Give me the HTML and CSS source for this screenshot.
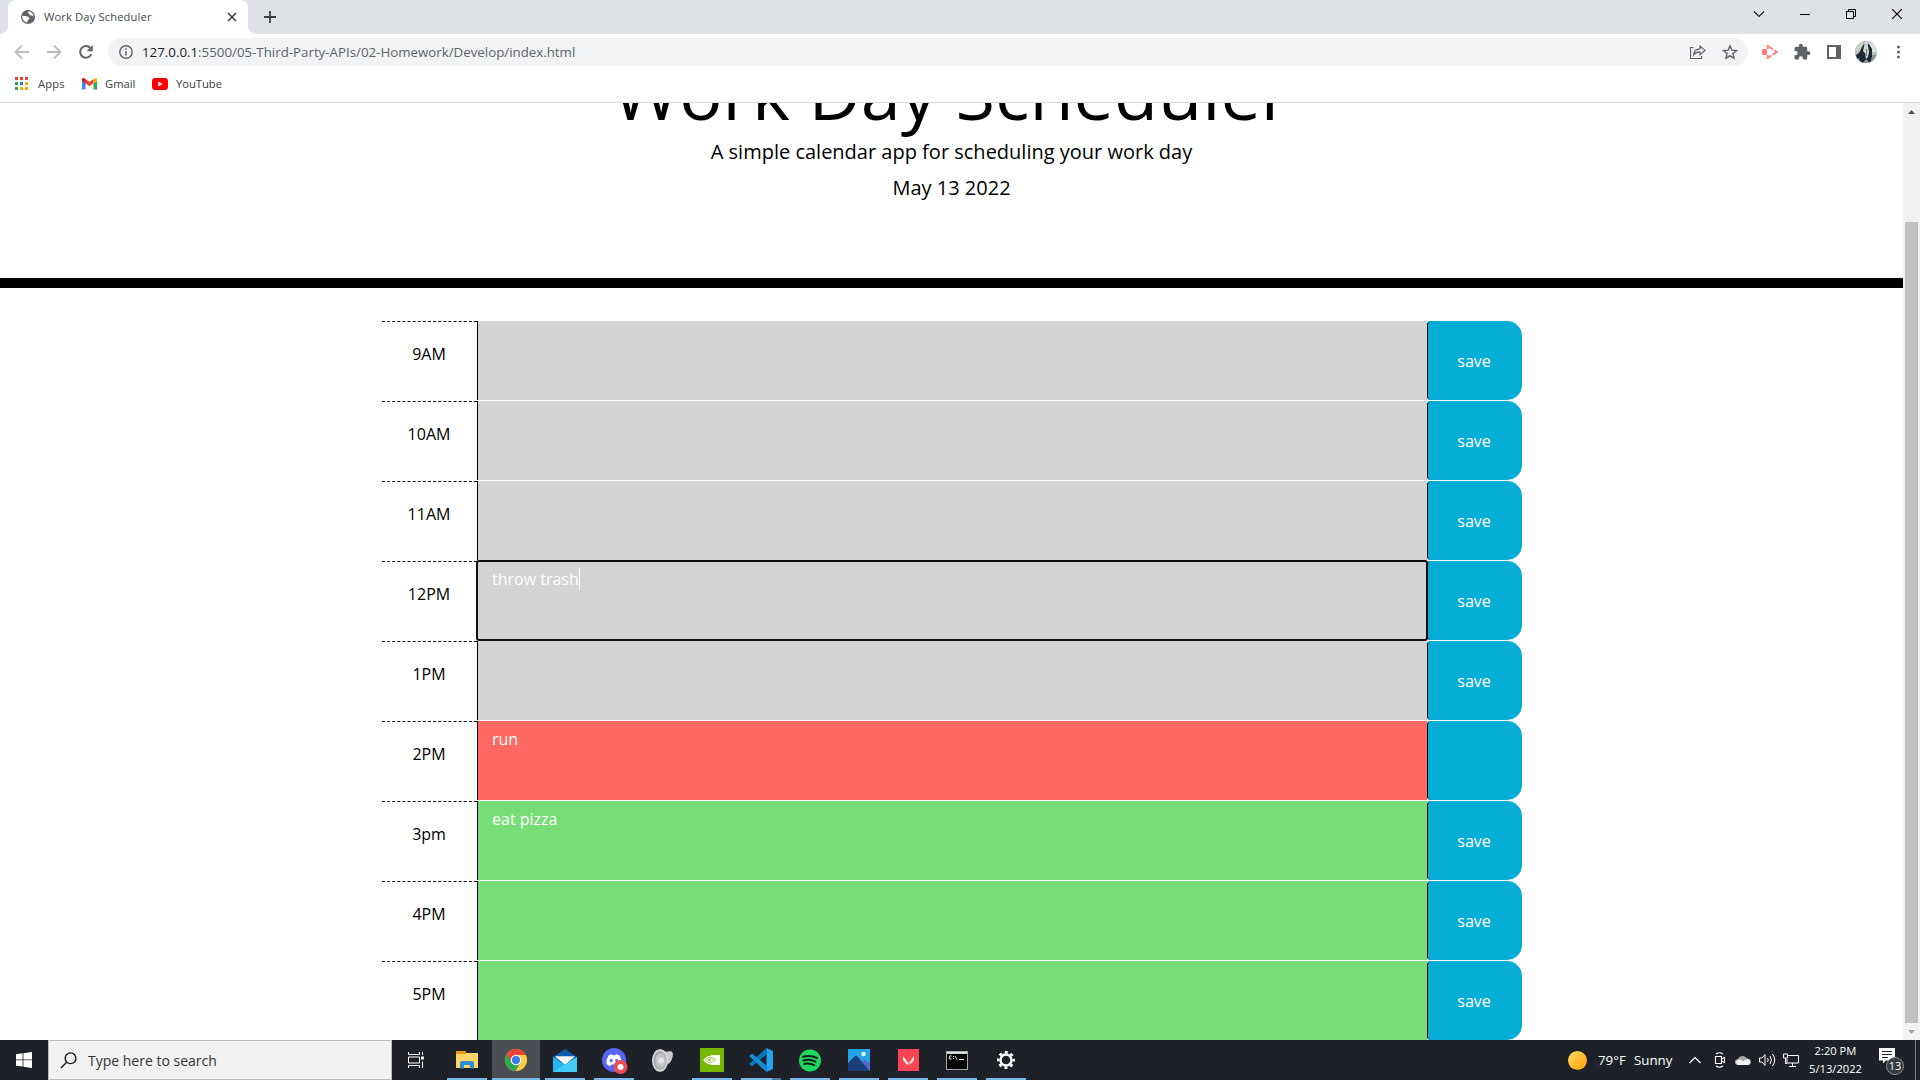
FILE: index.html
```html
<!DOCTYPE html>
<html lang="en">
<head>
<meta charset="utf-8">
<title>Work Day Scheduler</title>
<link rel="stylesheet" href="styles.css">
</head>
<body>
<div class="tabstrip">
  <div class="tab">
    <svg class="globe" width="16" height="16" viewBox="0 0 16 16"><circle cx="8" cy="8" r="7" fill="#5f6368"/><path d="M2.400 6.800L7 7.200c1 .3 1 1.300 2.300 1.300.8 2-2 2-2.100 4.900C4.500 13.300 2.300 10.500 2.300 8zM9 2.300c-1.500 1-2 2.300.2 2.400.4 1.500 1.600 2 3.300 1.800l1 1.500c.2-3-1.800-5.300-4.500-5.700z" fill="#fff"/></svg>
    <span class="tab-title">Work Day Scheduler</span>
    <svg class="tab-close" width="10" height="10" viewBox="0 0 10 10"><path d="M1 1l8 8M9 1l-8 8" stroke="#3c4043" stroke-width="1.600"/></svg>
  </div>
  <svg class="newtab" width="12" height="12" viewBox="0 0 12 12"><path d="M6 0v12M0 6h12" stroke="#3c4043" stroke-width="1.800"/></svg>
  <div class="winctl">
    <span><svg width="12" height="8" viewBox="0 0 12 8"><path d="M1 1.500l5 5 5-5" fill="none" stroke="#222" stroke-width="1.200"/></svg></span>
    <span><svg width="10" height="2" viewBox="0 0 10 2"><path d="M0 1.500h10" stroke="#000"/></svg></span>
    <span><svg width="10" height="10" viewBox="0 0 10 10"><path d="M.5 2.500h7v7h-7zM2.500 2.500v-2h7v7h-2" fill="none" stroke="#000"/></svg></span>
    <span><svg width="10" height="10" viewBox="0 0 10 10"><path d="M0 0l10 10M10 0L0 10" stroke="#000" stroke-width="1.100"/></svg></span>
  </div>
</div>
<div class="toolbar">
  <span class="slot"><svg width="16" height="16" viewBox="0 0 16 16"><path d="M15 8H2.500M8 1.500L1.500 8 8 14.500" fill="none" stroke="#babcbe" stroke-width="1.800"/></svg></span>
  <span class="slot"><svg width="16" height="16" viewBox="0 0 16 16"><path d="M1 8h12.500M8 1.500L14.500 8 8 14.500" fill="none" stroke="#babcbe" stroke-width="1.800"/></svg></span>
  <span class="slot"><svg width="16" height="16" viewBox="0 0 16 16"><path d="M13.300 10.200A5.800 5.800 0 1 1 12.300 4" fill="none" stroke="#5f6368" stroke-width="2"/><path d="M14.800 1v6.200H8.600z" fill="#5f6368"/></svg></span>
  <div class="omnibox">
    <svg width="14" height="14" viewBox="0 0 14 14"><circle cx="7" cy="7" r="6.200" fill="none" stroke="#5f6368" stroke-width="1.400"/><path d="M7 6v4.500M7 3.300v1.500" stroke="#5f6368" stroke-width="1.500"/></svg>
    <span class="url"><b>127.0.0.1</b>:5500/05-Third-Party-APIs/02-Homework/Develop/index.html</span>
    <span class="slot"><svg width="16" height="16" viewBox="0 0 16 16"><path d="M3.500 3.500h-3v11h11V12" fill="none" stroke="#5f6368" stroke-width="1.200"/><path d="M3.600 10.800C4 7 6 5 10 4.900V2l5 4.400-5 4.300V7.900c-3 0-4.900.8-6.400 2.900z" fill="none" stroke="#5f6368" stroke-width="1.200"/></svg></span>
    <span class="slot"><svg width="16" height="16" viewBox="0 0 16 16"><path d="M8 1.800l1.800 4.300 4.700.4-3.600 3.100 1.100 4.600L8 11.800l-4 2.400 1.100-4.600L1.500 6.500l4.700-.4z" fill="none" stroke="#5f6368" stroke-width="1.400"/></svg></span>
  </div>
  <span class="slot"><svg width="16" height="14" viewBox="0 0 16 14"><rect x="0" y="4" width="5" height="6" rx="1" fill="#ff7c7c"/><path d="M5.800 4V1L15 7l-9.200 6v-3" fill="none" stroke="#ff7c7c" stroke-width="1.800" stroke-dasharray="9 1.500"/></svg></span>
  <span class="slot"><svg width="18" height="18" viewBox="0 0 24 24"><path d="M20.500 11H19V7a2 2 0 0 0-2-2h-4V3.500a2.500 2.500 0 0 0-5 0V5H4a2 2 0 0 0-2 2v3.800h1.500a2.700 2.700 0 0 1 0 5.400H2V20a2 2 0 0 0 2 2h3.800v-1.500a2.700 2.700 0 0 1 5.400 0V22H17a2 2 0 0 0 2-2v-4h1.500a2.500 2.500 0 0 0 0-5z" fill="#5f6368"/></svg></span>
  <span class="slot"><svg width="14" height="14" viewBox="0 0 14 14"><path d="M0 0h14v14H0zM2 2v10h7V2z" fill="#5f6368" fill-rule="evenodd"/></svg></span>
  <span class="slot"><svg width="22" height="22" viewBox="0 0 22 22"><defs><clipPath id="av"><circle cx="11" cy="11" r="11"/></clipPath></defs><g clip-path="url(#av)"><path d="M0 0h22v22H0z" fill="#b4c2bd"/><path d="M0 0h8v10H0z" fill="#c9d2c6"/><path d="M14 2h8v9h-8z" fill="#d8e2df"/><path d="M0 14h22v8H0z" fill="#8494a3"/><path d="M7 6l2-3 2 1 3-1 3 5 0 8-2 6-4-4-3 4-3-1-1-4-2 1-1-4 3-2z" fill="#1e2a33"/><path d="M10 1l2-1 1 5 1 6-1 5-2 2-1-6-2-2z" fill="#d5d7d2"/><path d="M11 8l1 0v7h-1z" fill="#707b80"/></g></svg></span>
  <span class="slot"><svg width="4" height="14" viewBox="0 0 4 14"><g fill="#5f6368"><circle cx="2.500" cy="2" r="1.500"/><circle cx="2.500" cy="7" r="1.500"/><circle cx="2.500" cy="12" r="1.500"/></g></svg></span>
</div>
<div class="bookmarks">
  <svg width="13" height="13" viewBox="0 0 13 13"><path d="M0 0h3v3H0zM5 0h3v3H5zM10 0h3v3h-3z" fill="#ea4335"/><path d="M0 5h3v3H0zM0 10h3v3H0z" fill="#34a853"/><path d="M5 5h3v3H5z" fill="#1a73e8"/><path d="M10 5h3v3h-3zM5 10h3v3H5zM10 10h3v3h-3z" fill="#f9ab00"/></svg>
  <span class="bm apps">Apps</span>
  <svg width="15" height="12" viewBox="0 0 15 12"><path d="M0 2v9.500h3.500V5z" fill="#4285f4"/><path d="M15 2v9.500h-3.500V5z" fill="#34a853"/><path d="M0 2.500V1.500C0 0 2 0 3 .8L7.500 4 12 .8l-.5 4.500-4 3-4-3z" fill="#ea4335"/><path d="M11.500 1.200C13 0 15 0 15 1.700v1.100l-3.500 2.600z" fill="#fbbc04"/><path d="M0 1.700v1.100l3.500 2.600V1.200C2 0 0 0 0 1.700z" fill="#c5221f"/></svg>
  <span class="bm gmail">Gmail</span>
  <svg width="16" height="12" viewBox="0 0 16 12"><rect width="16" height="12" rx="3" fill="#f00"/><path d="M6.300 3.500v5L10.500 6z" fill="#fff"/></svg>
  <span class="bm youtube">YouTube</span>
</div>

<div class="viewport">
  <div class="page">
    <header class="jumbotron">
      <h1>Work Day Scheduler</h1>
      <p class="lead">A simple calendar app for scheduling your work day</p>
      <p class="lead date">May 13 2022</p>
    </header>
    <main class="container">
      <div class="row"><div class="hour">9AM</div><div class="description past"></div><div class="save">save</div></div>
      <div class="row"><div class="hour">10AM</div><div class="description past"></div><div class="save">save</div></div>
      <div class="row"><div class="hour">11AM</div><div class="description past"></div><div class="save">save</div></div>
      <div class="row"><div class="hour">12PM</div><div class="description past focused">throw trash<i class="caret"></i></div><div class="save">save</div></div>
      <div class="row"><div class="hour">1PM</div><div class="description past"></div><div class="save">save</div></div>
      <div class="row"><div class="hour">2PM</div><div class="description present">run</div><div class="save"></div></div>
      <div class="row"><div class="hour">3pm</div><div class="description future">eat pizza</div><div class="save">save</div></div>
      <div class="row"><div class="hour">4PM</div><div class="description future"></div><div class="save">save</div></div>
      <div class="row"><div class="hour">5PM</div><div class="description future"></div><div class="save">save</div></div>
    </main>
  </div>
  <div class="scrollbar">
    <svg width="7" height="4" viewBox="0 0 7 4"><path d="M0 4L3.500 0 7 4z" fill="#505050"/></svg>
    <div class="thumb"></div>
    <svg width="7" height="4" viewBox="0 0 7 4"><path d="M0 0l3.500 4L7 0z" fill="#a3a3a3"/></svg>
  </div>
</div>

<div class="taskbar">
  <div class="start"><svg width="16" height="16" viewBox="0 0 16 16"><path d="M0 2.200L6.600 1.300v6.200H0zM7.400 1.200L16 0v7.500H7.400zM0 8.300h6.600v6.300L0 13.700zM7.400 8.300H16V16l-8.600-1.200z" fill="#fff"/></svg></div>
  <div class="search">
    <svg width="17" height="17" viewBox="0 0 17 17"><circle cx="10.500" cy="6.300" r="5.400" fill="none" stroke="#111" stroke-width="1.300"/><path d="M6.700 10.200L.8 16" stroke="#111" stroke-width="1.300"/></svg>
    <span class="search-text">Type here to search</span>
  </div>
  <div class="taskview"><svg width="17" height="16" viewBox="0 0 17 16"><path d="M.5 0v2.500h11V0M.5 16v-2.500h11V16M.5 5h11v6H.5zM14.500 0v3M14.500 9.500V16" fill="none" stroke="#fff"/><path d="M13 4.500h3v3h-3z" fill="#fff"/></svg></div>
  <div class="apps-list">
    <div class="app open"><svg width="22" height="18" viewBox="0 0 22 18"><path d="M0 0h9l1.500 2H22v15H0z" fill="#ffd567"/><path d="M0 0h9l1.500 2L9 3H0z" fill="#e19b12"/><path d="M4 17.500V12q0-2 2-2h10q2 0 2 2v5.500h-4V14H8v3.500z" fill="#2f8ed8"/></svg></div>
    <div class="app open active"><svg width="22" height="22" viewBox="0 0 22 22"><circle cx="11" cy="11" r="11" fill="#ffcd41"/><path d="M1.500 5.500a11 11 0 0 0 9 16.500l5-8.500-4.500-2.500z" fill="#2da94f"/><path d="M11 6h9.800A11 11 0 0 0 1.500 5.500L6.500 13z" fill="#ea4335"/><circle cx="11" cy="11" r="5.300" fill="#fff"/><circle cx="11" cy="11" r="4.200" fill="#3b7ded"/></svg></div>
    <div class="app open"><svg width="24" height="23" viewBox="0 0 24 23"><path d="M0 8L12 0l12 8v3H0z" fill="#0b5db0"/><path d="M2 7.500h20L12 16z" fill="#f5f5f5"/><path d="M0 8l12 7.500L24 8v15H0z" fill="#24b5f0"/><path d="M0 23l24-15v15z" fill="#45cdf7"/><path d="M3 7.500h18L12 14.500z" fill="#f5f5f5"/></svg></div>
    <div class="app open"><svg class="discord" width="26" height="26" viewBox="0 0 26 26"><circle cx="12" cy="12" r="12" fill="#5865f2"/><path d="M6.500 7.500Q9 6 10 6.300l.5 1h3l.5-1q1 0 3.500 1.200 2.500 4 2 8.500-2 1.800-4 2l-1-1.600h-5L8.500 18q-2-.2-4-2-.5-4.500 2-8.500z" fill="#fff"/><ellipse cx="9.300" cy="12.500" rx="1.500" ry="1.700" fill="#5865f2"/><ellipse cx="14.700" cy="12.500" rx="1.500" ry="1.700" fill="#5865f2"/><circle cx="18.500" cy="19" r="7" fill="#ed4b55"/><circle cx="18.500" cy="19" r="3" fill="#fff"/></svg></div>
    <div class="app"><svg width="22" height="23" viewBox="0 0 22 23"><path d="M8 0l6 2.500 5-.5q2.500 1 2 5-1 5-4 8l-3 .5-5 6.500z" fill="#8f9294"/><path d="M14 3l5-.5q2 1 1.500 4.500-1 5-3.500 7h-3z" fill="#c9cbcc"/><ellipse cx="8" cy="11.500" rx="8" ry="11.300" fill="#dadcdd"/><ellipse cx="8" cy="11.500" rx="6.500" ry="9.500" fill="#a5a8aa"/><ellipse cx="8.500" cy="11.500" rx="5" ry="7.500" fill="#c2c5c6"/><circle cx="9" cy="11.500" r="3" fill="#e4e5e6"/></svg></div>
    <div class="app open"><svg width="24" height="24" viewBox="0 0 24 24"><path d="M0 0h24v24H0z" fill="#76b900"/><path d="M11 7h9v10h-9z" fill="#fff"/><path d="M4 12Q10.500 4.500 17 12 10.500 19.500 4 12z" fill="#76b900" stroke="#fff" stroke-width="1.200"/><path d="M6.800 12q3.700-4 7.400 0-3.700 4-7.400 0z" fill="none" stroke="#fff" stroke-width="1.200"/><circle cx="11" cy="12" r="1" fill="#fff"/></svg></div>
    <div class="app open grouped"><svg width="24" height="24" viewBox="0 0 24 24"><path d="M17.500 0L24 3v18l-6.500 3z" fill="#24a4ef"/><path d="M17.500 0v6.500L3 18.500l-3-2.500z" fill="#0875b8"/><path d="M0 8l3-2.500 14.500 12V24z" fill="#128bd4"/></svg></div>
    <div class="app open"><svg width="22" height="23" viewBox="0 0 22 22"><circle cx="11" cy="11" r="11" fill="#1ed760"/><path d="M4 7.300q7.500-2 14 1.200M4.500 11q6.500-1.700 12 1.200M5.200 14.500q5.500-1.300 10 1.200" fill="none" stroke="#17201b" stroke-width="2" stroke-linecap="round"/></svg></div>
    <div class="app open"><svg width="22" height="22" viewBox="0 0 22 22"><path d="M0 0h22v22H0z" fill="#25a3ea"/><path d="M0 14l7-7q1-1 2 0l13 15H0z" fill="#1b3f78"/><path d="M14 13l2-2q1-1 2 0l4 4v7z" fill="#5468c4"/><circle cx="15.500" cy="5" r="2.200" fill="#e8f7ff"/></svg></div>
    <div class="app open"><svg width="21" height="22" viewBox="0 0 21 22"><path d="M0 0h21v22H0z" fill="#fd4556"/><path d="M5 7l6.500 8.500H8.700L5 11zM16 7v4l-2.700 3.500h-2.500z" fill="#f3ece3"/></svg></div>
    <div class="app open"><svg width="22" height="19" viewBox="0 0 22 19"><path d="M0 0h22v19H0z" fill="#a5a8aa"/><path d="M1 3h20v15H1z" fill="#050505"/><path d="M1 1h20v1.500H1z" fill="#e9e9e9"/><path d="M5.500 5h-2v3h2M7.500 5v1M7.500 7v1M9 5l2 3.500M13 8.500h5" fill="none" stroke="#ddd"/></svg></div>
    <div class="app open"><svg width="18" height="18" viewBox="0 0 18 18"><circle cx="9" cy="9" r="5.500" fill="none" stroke="#fff" stroke-width="2.400"/><circle cx="9" cy="9" r="7.700" fill="none" stroke="#fff" stroke-width="2.500" stroke-dasharray="3 3.047" stroke-dashoffset="1.500"/></svg></div>
  </div>
  <div class="tray">
    <i class="sun"></i>
    <span class="weather"><span class="temp">79°F</span><span class="sunny">Sunny</span></span>
    <svg class="t-up" width="12" height="8" viewBox="0 0 12 8"><path d="M.5 7L6 1.500 11.500 7" fill="none" stroke="#fff" stroke-width="1.200"/></svg>
    <svg class="t-cam" width="12" height="16" viewBox="0 0 12 16"><path d="M1.500 4.500h6v7h-6zM7.500 7l3-1.500v5l-3-1.500M2 2q3.500-2.500 7 0M2 14q3.500 2.500 7 0" fill="none" stroke="#fff" stroke-width="1.100"/></svg>
    <svg class="t-cloud" width="16" height="10" viewBox="0 0 16 10"><path d="M3 10a3 3 0 0 1 0-6 5 5 0 0 1 9-.5 3.300 3.300 0 0 1 1 6.500z" fill="#a7a7a7"/><path d="M3 10a3 3 0 0 1-.5-5q3-1.500 5.500 1.200l4-2.200a3 3 0 0 1 1 6z" fill="#f4f4f4"/></svg>
    <svg class="t-vol" width="17" height="14" viewBox="0 0 17 14"><path d="M.5 5H3l3-3.500v11L3 9H.5zM8.500 5q1.500 2 0 4M11 3q3 4 0 8M13.500 1q4.500 6 0 12" fill="none" stroke="#fff"/></svg>
    <svg class="t-net" width="16" height="14" viewBox="0 0 16 14"><path d="M5 2.500h10.500v7.500H4V6M.5 1h4v4h-4zM2.500 5v5.500H4M9.500 10v3M6 13.500h7" fill="none" stroke="#fff"/></svg>
    <div class="clock"><span class="time">2:20 PM</span><span class="day">5/13/2022</span></div>
    <div class="notif">
      <svg width="16" height="16" viewBox="0 0 16 16"><path d="M0 0h16v12.500H7l-3 3v-3H0z" fill="#fff"/><path d="M3 3.500h10M3 6.500h10M3 9.500h6" stroke="#1e2228"/></svg>
      <span class="count">13</span>
    </div>
    <i class="peek"></i>
  </div>
</div>
</body>
</html>
```
FILE: styles.css
```css
* { box-sizing: border-box; }
html, body { height: 100%; }
body {
  margin: 0;
  display: flex;
  flex-direction: column;
  overflow: hidden;
  background: #fff;
  font-family: "Open Sans", sans-serif;
  white-space: nowrap;
}
svg { display: block; flex: none; }
p, h1 { margin: 0; }

/* browser tab strip */
.tabstrip {
  height: 34px;
  flex: none;
  display: flex;
  align-items: center;
  padding-left: 8px;
  background: #dee1e6;
}
.tab {
  position: relative;
  width: 240px;
  height: 34px;
  display: flex;
  align-items: center;
  padding: 0 11px 0 12px;
  background: #fff;
  border-radius: 8px 8px 0 0;
}
.tab::before, .tab::after {
  content: "";
  position: absolute;
  bottom: 0;
  width: 8px;
  height: 8px;
}
.tab::before { left: -8px; background: radial-gradient(circle at 0 0, transparent 7.500px, #fff 8px); }
.tab::after { right: -8px; background: radial-gradient(circle at 100% 0, transparent 7.500px, #fff 8px); }
.tab-title { margin-left: 8px; flex: 1; font-size: 11.200px; letter-spacing: .13px; line-height: 16px; padding-bottom: 1px; color: #45494d; }
.newtab { margin-left: 16px; }
.winctl { margin-left: auto; align-self: flex-start; display: flex; height: 28px; }
.winctl span { width: 46px; display: flex; align-items: center; justify-content: center; }

/* address bar */
.toolbar {
  height: 36px;
  flex: none;
  display: flex;
  align-items: center;
  padding: 0 6px;
}
.slot { width: 32px; display: flex; align-items: center; justify-content: center; flex: none; }
.omnibox {
  flex: 1;
  height: 28px;
  margin: 0 6px;
  padding: 0 2px 0 11px;
  display: flex;
  align-items: center;
  border-radius: 14px;
  background: #f1f3f4;
}
.url { flex: 1; margin-left: 9px; font-size: 13.300px; color: #5f6368; }
.url b { font-weight: 400; color: #202124; }

.bookmarks {
  height: 33px;
  flex: none;
  display: flex;
  align-items: center;
  padding: 0 0 5px 15px;
  border-bottom: 1px solid #d8dadc;
  font-size: 11.200px;
  color: #3c4043;
}
.apps { width: 44px; margin-left: 10px; letter-spacing: .2px; }
.gmail { width: 47px; margin-left: 8px; }
.youtube { margin-left: 8px; }

/* web page */
.viewport { height: 937px; flex: none; display: flex; overflow: hidden; }
.page { flex: 1; overflow: hidden; color: #000; }
.jumbotron {
  height: 240px;
  margin-top: -55px;
  text-align: center;
  border-bottom: 10px solid #000;
}
.jumbotron h1 { font-size: 72px; font-weight: 400; line-height: 88px; }
.lead { font-size: 20px; line-height: 30px; margin-top: 1px; }
.lead.date { margin-top: 6px; }
.container { width: 1140px; margin: 33px auto 0 382px; font-size: 16px; line-height: 24px; }
.row { display: grid; grid-template-columns: 95px 950px 95px; height: 80px; }
.hour { padding: 20px 1px 0 0; text-align: center; border-top: 1px dashed #000; }
.description {
  height: 79px;
  padding: 6px 14px;
  display: flex;
  align-items: flex-start;
  color: #fff;
  border-left: 1px solid #000;
}
.past { background: #d3d3d3; }
.present { background: #ff6961; }
.future { background: #77dd77; }
.focused {
  border-radius: 2px;
  border-left-color: transparent;
  outline: 2px solid #101010;
  outline-offset: -1px;
}
.caret { width: 1px; height: 22px; margin-top: 1px; background: #fff; }
.save {
  height: 79px;
  padding-right: 2px;
  display: flex;
  align-items: center;
  justify-content: center;
  color: #fff;
  background: #06aed5;
  border-left: 1px solid #000;
  border-radius: 4px 15px 15px 4px;
}
.scrollbar {
  width: 17px;
  display: flex;
  flex-direction: column;
  align-items: center;
  padding: 7px 0 6px;
  background: #f1f1f1;
}
.thumb { width: 13px; height: 801px; margin: 108px 0 auto; background: #c1c1c1; }

/* taskbar */
.taskbar { height: 40px; flex: none; display: flex; background: #1e2228; color: #fff; }
.start { width: 48px; display: flex; align-items: center; justify-content: center; }
.search {
  width: 344px;
  display: flex;
  align-items: center;
  padding-left: 11px;
  background: #f1f1f1;
  border: 1px solid #bdbdbd;
}
.search-text { margin-left: 11px; font-size: 14px; color: #333; }
.taskview { width: 51px; padding-left: 16px; display: flex; align-items: center; }
.apps-list { display: flex; gap: 1px; }
.app {
  width: 48px;
  height: 40px;
  display: flex;
  align-items: center;
  justify-content: center;
  background: linear-gradient(#76b9ed, #76b9ed) 50% 100% / 0 2px no-repeat;
}
.open { background-size: 40px 2px; }
.active { background-size: 100% 2px; background-color: #4b4e53; }
.grouped { background-image: linear-gradient(90deg, #76b9ed 31px, #4c7ba4 31px); }
.discord { margin-left: 2px; margin-top: 2px; }
.tray { margin-left: auto; display: flex; align-items: center; }
.sun { width: 19px; height: 19px; border-radius: 50%; background: linear-gradient(135deg, #ffdc61, #ff9d0b); }
.weather { display: flex; margin-left: 11px; width: 91px; font-size: 13.300px; }
.temp { width: 36px; }
.t-cam { margin-left: 13px; }
.t-cloud { margin-left: 9px; }
.t-vol { margin-left: 8px; }
.t-net { margin-left: 7px; }
.clock { width: 73px; display: flex; flex-direction: column; align-items: center; font-size: 11.200px; line-height: 18px; }
.notif { position: relative; width: 36px; margin-left: 7px; padding-top: 4px; height: 32px; }
.peek { width: 5px; height: 40px; border-left: 1px solid #7b7e82; }
.count {
  position: absolute;
  left: 7px;
  top: 13px;
  width: 18px;
  height: 18px;
  border: 1px solid #8b8d90;
  border-radius: 50%;
  background: #383b40;
  font-size: 11px;
  line-height: 16px;
  text-align: center;
}
```
